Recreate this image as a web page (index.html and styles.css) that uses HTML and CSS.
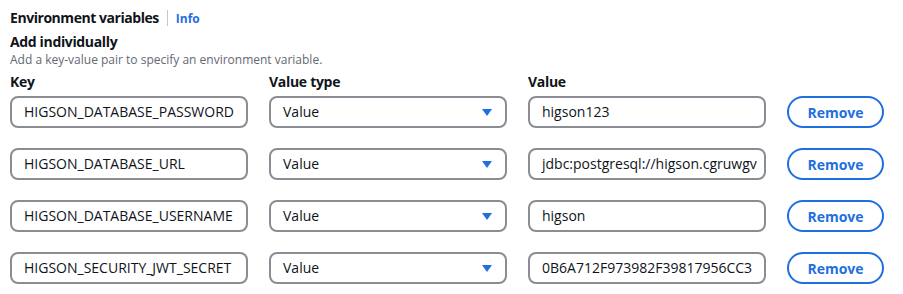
FILE: index.html
```html
<!DOCTYPE html>
<html>
<head>
<meta charset="utf-8">
<link rel="stylesheet" href="styles.css">
</head>
<body>
<div class="panel">
  <div class="header">
    <h2 class="title">Environment variables</h2>
    <span class="divider"></span>
    <a class="info">Info</a>
  </div>
  <h3 class="subtitle">Add individually</h3>
  <p class="desc">Add a key-value pair to specify an environment variable.</p>
  <div class="grid">
    <div class="label">Key</div>
    <div class="label">Value type</div>
    <div class="label">Value</div>
    <div></div>

    <div class="field">HIGSON_DATABASE_PASSWORD</div>
    <div class="field select">Value<span class="caret"></span></div>
    <div class="field">higson123</div>
    <button class="remove">Remove</button>

    <div class="field">HIGSON_DATABASE_URL</div>
    <div class="field select">Value<span class="caret"></span></div>
    <div class="field">jdbc:postgresql://higson.cgruwgv</div>
    <button class="remove">Remove</button>

    <div class="field">HIGSON_DATABASE_USERNAME</div>
    <div class="field select">Value<span class="caret"></span></div>
    <div class="field">higson</div>
    <button class="remove">Remove</button>

    <div class="field">HIGSON_SECURITY_JWT_SECRET</div>
    <div class="field select">Value<span class="caret"></span></div>
    <div class="field">0B6A712F973982F39817956CC3</div>
    <button class="remove">Remove</button>
  </div>
</div>
</body>
</html>
```

FILE: styles.css
```css
* { box-sizing: border-box; }
body {
  margin: 0;
  background: #ffffff;
  font-family: "Open Sans", "Noto Sans", sans-serif;
  color: #0f141a;
}
.panel {
  padding: 8px 10px 0 10px;
}
.header {
  display: flex;
  align-items: center;
  height: 20px;
}
.title {
  margin: 0;
  font-size: 14px;
  font-weight: 700;
  line-height: 20px;
  letter-spacing: -0.45px;
}
.divider {
  width: 1px;
  height: 16px;
  background: #c6c6cd;
  margin: 0 8px 0 8px;
}
.info {
  color: #1f6fdf;
  font-size: 12px;
  font-weight: 700;
}
.subtitle {
  margin: 4px 0 0 0;
  font-size: 14px;
  font-weight: 700;
  line-height: 20px;
  letter-spacing: -0.35px;
}
.desc {
  margin: 0;
  font-size: 12px;
  line-height: 16px;
  color: #656871;
}
.grid {
  margin-top: 6px;
  display: grid;
  grid-template-columns: 238px 238px 238px 97px;
  column-gap: 21px;
  row-gap: 20px;
  align-items: center;
}
.label {
  font-size: 14px;
  font-weight: 700;
  line-height: 16px;
  letter-spacing: -0.3px;
  margin-bottom: -14px;
}
.field {
  height: 32px;
  border: 2px solid #8c8c94;
  border-radius: 8px;
  padding: 0 12px;
  font-size: 14px;
  line-height: 28px;
  white-space: nowrap;
  overflow: hidden;
  color: #0f141a;
}
.select {
  display: flex;
  justify-content: space-between;
  align-items: center;
}
.caret {
  width: 0;
  height: 0;
  border-left: 5px solid transparent;
  border-right: 5px solid transparent;
  border-top: 7px solid #1f6fdf;
  margin-right: 1px;
}
.remove {
  height: 32px;
  border: 2px solid #1f6fdf;
  border-radius: 16px;
  background: #fff;
  color: #1f6fdf;
  font-family: inherit;
  font-size: 14px;
  font-weight: 700;
  padding: 0;
}
```
